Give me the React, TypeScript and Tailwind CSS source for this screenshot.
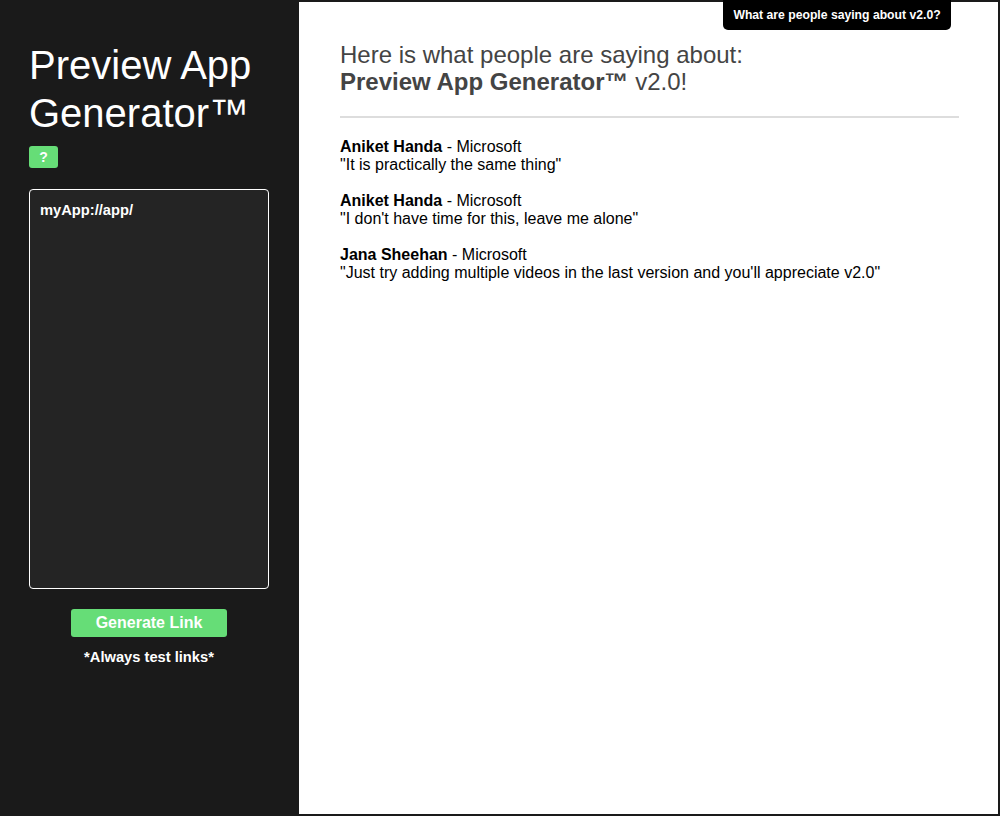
const reviews = [
  { name: "Aniket Handa", company: "Microsoft", quote: "It is practically the same thing" },
  { name: "Aniket Handa", company: "Microsoft", quote: "I don't have time for this, leave me alone" },
  {
    name: "Jana Sheehan",
    company: "Microsoft",
    quote: "Just try adding multiple videos in the last version and you'll appreciate v2.0",
  },
];

export default function App() {
  return (
    <div className="relative flex h-[816px] w-[1000px] bg-[#1a1a1a] font-['Liberation_Sans',Arial,sans-serif]">
      <aside className="flex w-[299px] shrink-0 flex-col px-[29px] pt-[41px]">
        <h1 className="text-[40px] leading-[48px] text-white">
          Preview App Generator™
        </h1>
        <button className="mt-[9px] flex h-[22px] w-[29px] items-center justify-center rounded-[3px] bg-[#66dd77] text-[14px] font-bold text-white">
          ?
        </button>
        <textarea
          defaultValue="myApp://app/"
          className="mt-[21px] h-[400px] w-[240px] resize-none rounded-[4px] border border-white bg-[#242424] px-[10px] py-[11px] text-[14.7px] font-bold leading-[18px] text-white outline-none"
        />
        <div className="mt-[20px] flex w-[240px] flex-col items-center">
          <button className="h-[28px] w-[156px] rounded-[3px] bg-[#66dd77] text-[16px] font-bold text-white">
            Generate Link
          </button>
          <p className="mt-[9px] text-[14.7px] font-bold text-white">*Always test links*</p>
        </div>
      </aside>

      <main className="mb-[2px] mr-[2px] mt-[2px] flex-1 bg-white pl-[41px] pr-[39px] pt-[39px]">
        <h2 className="text-[24px] leading-[27px] text-[#444]">
          Here is what people are saying about:
          <br />
          <span className="font-bold">Preview App Generator™</span> v2.0!
        </h2>
        <hr className="mt-[21px] border-t-2 border-[#ddd]" />
        <div className="mt-[20px] flex flex-col gap-[18px]">
          {reviews.map((r, i) => (
            <div key={i} className="text-[16px] leading-[18px] text-black">
              <div>
                <span className="font-bold">{r.name}</span> - {r.company}
              </div>
              <div>"{r.quote}"</div>
            </div>
          ))}
        </div>
      </main>

      <div className="absolute left-[723px] top-0 flex h-[30px] w-[228px] items-center justify-center rounded-b-[5px] bg-black text-[12.2px] font-bold text-white">
        What are people saying about v2.0?
      </div>
    </div>
  );
}
